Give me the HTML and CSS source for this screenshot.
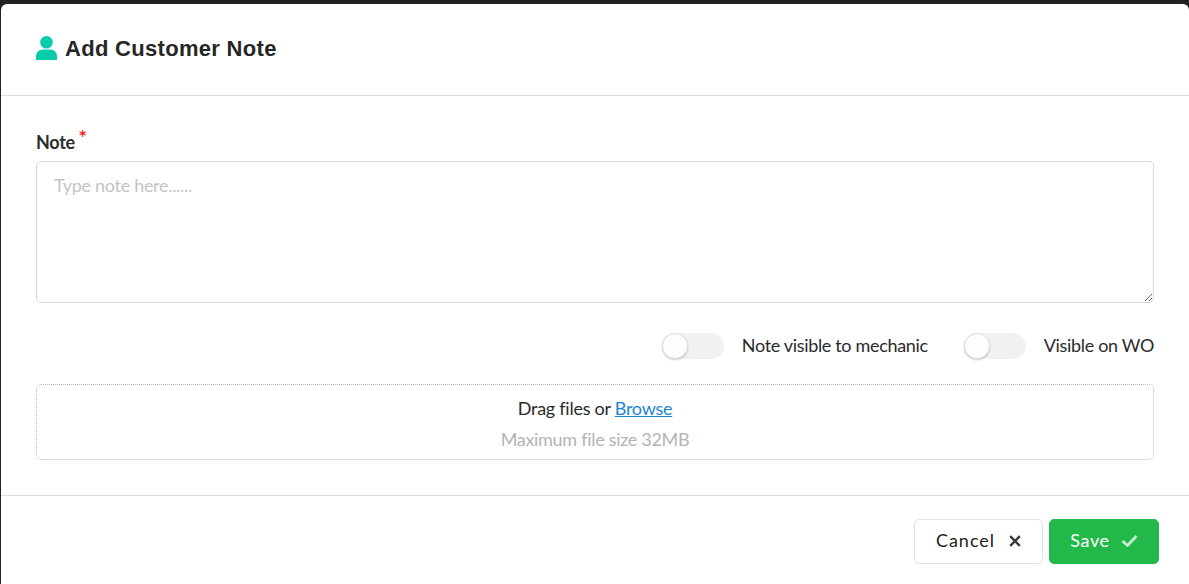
FILE: index.html
```html
<!DOCTYPE html>
<html lang="en">
<head>
<meta charset="utf-8">
<title>Add Customer Note</title>
<link rel="stylesheet" href="styles.css">
</head>
<body>
<div class="modal">
  <header class="modal-header">
    <svg class="user-icon" viewBox="0 0 21 24" aria-hidden="true"><circle cx="10.5" cy="6.3" r="6.300"/><path d="M0 24v-3.500C0 16.500 3 13.500 6.500 13.500h8c3.500 0 6.500 3 6.500 7V24z"/></svg>
    <h1 class="title">Add Customer Note</h1>
  </header>
  <main class="modal-body">
    <label class="note-label" for="note">Note <span class="req">*</span></label>
    <textarea class="note-input" id="note" placeholder="Type note here......"></textarea>
    <div class="toggles">
      <div class="toggle-item"><span class="switch"><span class="knob"></span></span><span class="toggle-text">Note visible to mechanic</span></div>
      <div class="toggle-item"><span class="switch"><span class="knob"></span></span><span class="toggle-text">Visible on WO</span></div>
    </div>
    <div class="dropzone">
      <div class="drop-line">Drag files or <a href="#" class="browse">Browse</a></div>
      <div class="drop-hint">Maximum file size 32MB</div>
    </div>
  </main>
  <footer class="modal-footer">
    <button class="btn btn-cancel" type="button"><span class="btn-text">Cancel</span> <svg class="btn-icon" viewBox="0 0 12 12" aria-hidden="true"><path d="M1.200 1.200l9.600 9.600M10.800 1.200l-9.600 9.600"/></svg></button>
    <button class="btn btn-save" type="button"><span class="btn-text">Save</span> <svg class="btn-icon check" viewBox="0 0 17 13" aria-hidden="true"><path d="M1.500 7l5 4.500L15.500 2"/></svg></button>
  </footer>
</div>
</body>
</html>
```

FILE: styles.css
```css
* { box-sizing: border-box; }
html, body { height: 100%; }
body {
  margin: 0;
  background: #222;
  font-family: Lato, "Liberation Sans", sans-serif;
  font-size: 18px;
  letter-spacing: -0.26px;
  color: #2b2b2b;
  overflow: hidden;
}
.modal {
  margin: 4px 0 0 1px;
  height: 580px;
  background: #fff;
  border-radius: 6px 6px 0 0;
  display: flex;
  flex-direction: column;
}
.modal-header {
  height: 92px;
  flex: none;
  border-bottom: 1px solid #ddd;
  display: flex;
  align-items: center;
  padding: 0 35px 2px;
  gap: 8px;
}
.user-icon { width: 21px; height: 24px; fill: #0accac; flex: none; margin-bottom: 2px; }
.title {
  margin: 0;
  padding-top: 1px;
  font-family: "Liberation Sans", Arial, sans-serif;
  font-size: 22px;
  font-weight: 700;
  letter-spacing: 0.3px;
  color: #262626;
}
.modal-body {
  flex: 1;
  padding: 34px 35px 0;
  display: flex;
  flex-direction: column;
}
.note-label { font-weight: 700; font-size: 18px; line-height: 24px; height: 31px; letter-spacing: -0.3px; }
.req { color: #f00; position: relative; top: -3px; left: -1px; font-weight: 400; font-size: 22px; line-height: 0; }
.note-input {
  display: block;
  width: 100%;
  height: 142px;
  border: 1px solid #d9d9d9;
  border-radius: 5px;
  padding: 11px 17px;
  font: 18px/24px Lato, sans-serif;
  letter-spacing: -0.3px;
  color: #2b2b2b;
  outline: none;
}
.note-input::placeholder { color: #c4c4c4; opacity: 1; }
.toggles {
  display: flex;
  justify-content: flex-end;
  align-items: center;
  gap: 36px;
  margin-top: 30px;
  height: 26px;
}
.toggle-item { display: flex; align-items: center; gap: 18px; }
.toggle-text { position: relative; top: -1px; letter-spacing: -0.33px; }
.switch {
  width: 62px;
  height: 26px;
  border-radius: 13px;
  background: #f1f1f1;
  position: relative;
  display: block;
}
.knob {
  position: absolute;
  left: 0;
  top: 0;
  width: 26px;
  height: 26px;
  border-radius: 50%;
  background: #fdfdfd;
  border: 1px solid #e2e2e2;
  box-shadow: 0 1px 2px rgba(0,0,0,.2);
}
.dropzone {
  margin-top: 25px;
  height: 76px;
  border: 1px dotted #bbb;
  border-radius: 5px;
  display: flex;
  flex-direction: column;
  align-items: center;
  padding-top: 11px;
}
.drop-line { line-height: 24px; }
.browse { color: #1c86d1; }
.drop-hint { color: #b4b4b4; line-height: 24px; margin-top: 7px; letter-spacing: -0.3px; }
.modal-footer {
  height: 89px;
  flex: none;
  border-top: 1px solid #ddd;
  display: flex;
  justify-content: flex-end;
  gap: 6px;
  padding: 23px 30px 0 0;
}
.btn {
  height: 45px;
  border-radius: 5px;
  font: 18px Lato, sans-serif;
  letter-spacing: 1px;
  display: flex;
  align-items: center;
  justify-content: center;
  padding: 0;
  cursor: pointer;
}
.btn-text { position: relative; top: -2px; }
.btn-cancel { width: 129px; gap: 14px; background: #fff; border: 1px solid #e2e2e2; color: #222; }
.btn-save { width: 110px; gap: 11px; letter-spacing: 0.6px; background: #22b94a; border: 1px solid #22b94a; color: #fff; }
.btn-icon { width: 12px; height: 12px; fill: none; stroke: #3a3a3a; stroke-width: 2.400; position: relative; top: -1px; }
.check { width: 17px; height: 13px; stroke: #c8eed2; stroke-width: 2.700; }
```
